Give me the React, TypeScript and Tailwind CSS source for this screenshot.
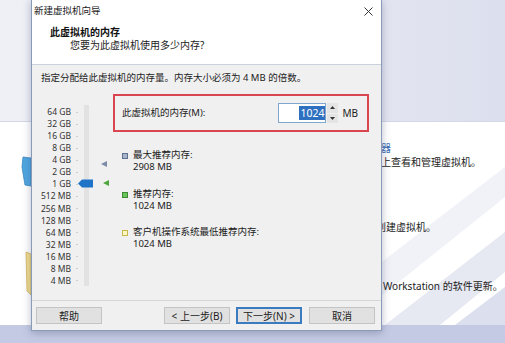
import React from 'react';

const sizes = ['64 GB', '32 GB', '16 GB', '8 GB', '4 GB', '2 GB', '1 GB', '512 MB', '256 MB', '128 MB', '64 MB', '32 MB', '16 MB', '8 MB', '4 MB'];

const font = "font-['Noto_Sans','Noto_Sans_CJK_SC',sans-serif]";

const Btn = ({ label, focused }: { label: string; focused?: boolean }) => (
  <button
    className={`h-[17px] w-[66px] text-[10px] leading-none text-[#222] bg-[#e1e1e1] ${
      focused ? 'border-2 border-[#3a7bbf]' : 'border border-[#c4c4c4]'
    }`}
  >
    {label}
  </button>
);

const Legend = ({ color, border, title, value, mt }: { color: string; border: string; title: string; value: string; mt: string }) => (
  <div className={`flex ${mt}`}>
    <div className="w-[20px] pl-[9px] pt-[4px]">
      <div className={`w-[6px] h-[6px] border ${color} ${border}`} />
    </div>
    <div className="text-[9.5px] leading-[12px] text-[#222]">
      <div>{title}</div>
      <div>{value}</div>
    </div>
  </div>
);

export default function App() {
  return (
    <div className={`relative w-[505px] h-[343px] overflow-hidden ${font}`}>
      {/* desktop app behind the dialog */}
      <div className="flex flex-col w-full h-full">
        <div className="h-[122px] bg-gradient-to-r from-[#eef0f6] via-[#e9ebf4] to-[#dcdfed] border-b border-[#d3d7e6]" />
        <div className="relative flex-1 bg-white flex">
          <svg className="absolute inset-0" width="505" height="203" viewBox="0 0 505 203">
            <polygon points="300,203 505,45 505,75 345,203" fill="#f1f2f8" />
            <polygon points="385,203 505,110 505,150 440,203" fill="#e6e8f2" />
            <polygon points="455,203 505,165 505,203" fill="#dcdfed" />
          </svg>
          <div className="relative w-[31px] h-full">
            <svg width="31" height="203" viewBox="0 0 31 203">
              <polygon points="23,35 31,36 31,64 25,63 22,45" fill="#4fa6e0" stroke="#3b86bf" strokeWidth="0.8" />
              <polygon points="26,130 31,132 31,173 27,169" fill="#f2dc8c" stroke="#cdb261" strokeWidth="0.8" />
            </svg>
          </div>
          <div className="relative ml-[350px] pt-[19px] text-[10px] leading-[14px] text-[#222] whitespace-nowrap">
            <div className="text-[#3a6db3]">器</div>
            <div>上查看和管理虚拟机。</div>
            <div className="mt-[51px] -ml-[5px]">创建虚拟机。</div>
            <div className="mt-[45px] ml-[2px]">Workstation 的软件更新。</div>
          </div>
        </div>
        <div className="h-[18px] bg-[#c4cae3]" />
      </div>

      {/* wizard dialog window */}
      <div className="absolute left-[31px] top-[-1px] w-[351px] h-[332px] flex flex-col bg-[#f0f0f0] border border-[#8a9bb8] shadow-[0_2px_8px_rgba(60,70,110,0.35)]">
        <div className="h-[22px] bg-white flex items-center justify-between pl-[2px] pr-[8px]">
          <span className="text-[9.5px] text-[#222]">新建虚拟机向导</span>
          <svg width="9" height="9" viewBox="0 0 9 9">
            <path d="M0.5 0.5 L8.5 8.5 M8.5 0.5 L0.5 8.5" stroke="#333" strokeWidth="1" />
          </svg>
        </div>
        <div className="h-[43px] bg-white border-b border-[#c9d1da] pt-[4px]">
          <div className="pl-[18px] text-[10px] leading-[13px] font-bold text-[#111]">此虚拟机的内存</div>
          <div className="pl-[38px] text-[10px] leading-[13px] text-[#222]">您要为此虚拟机使用多少内存?</div>
        </div>

        <div className="flex-1 flex flex-col">
          <div className="mt-[6px] pl-[9px] text-[9.5px] leading-[13px] text-[#222]">
            指定分配给此虚拟机的内存量。内存大小必须为 4 MB 的倍数。
          </div>
          <div className="flex flex-1">
            {/* slider */}
            <div className="w-[81px] flex">
              <div className="w-[39px] pt-[22px] text-right text-[8.5px] text-[#333]">
                {sizes.map((s) => (
                  <div key={s} className="h-[12.07px] leading-[12px] whitespace-nowrap">{s}</div>
                ))}
              </div>
              <div className="w-[12px] pt-[22px]">
                {sizes.map((s) => (
                  <div key={s} className="h-[12.07px] flex items-center pl-[5px]">
                    <div className="w-[2px] h-[1px] bg-[#cfcfcf]" />
                  </div>
                ))}
              </div>
              <div className="relative w-[30px]">
                <div className="ml-[1px] mt-[21px] w-[5px] h-[181px] bg-[#e2e2e2]" />
                <svg className="absolute left-[-5px] top-[95px]" width="16" height="9" viewBox="0 0 16 9">
                  <path d="M0 4.5 L4 0.5 L15 0.5 L15 8.5 L4 8.5 Z" fill="#1f74c8" />
                </svg>
                <svg className="absolute left-[18px] top-[77px]" width="7" height="6" viewBox="0 0 7 6">
                  <path d="M0 3 L6 0 L6 6 Z" fill="#7d8ba6" />
                </svg>
                <svg className="absolute left-[20px] top-[96px]" width="7" height="6" viewBox="0 0 7 6">
                  <path d="M0 3 L6 0 L6 6 Z" fill="#4ea63c" />
                </svg>
              </div>
            </div>

            {/* memory box and legend */}
            <div className="w-[256px]">
              <div className="mt-[10px] h-[38px] border-2 border-[#d9464f] flex items-center pl-[7px] pr-[9px]">
                <span className="text-[9.5px] text-[#222]">此虚拟机的内存(M):</span>
                <div className="ml-auto flex items-center">
                  <div className="w-[48px] h-[20px] bg-white border border-[#7ea6cf] flex items-center justify-end">
                    <span className="bg-[#2f6fc0] text-white text-[10.5px] leading-[14px] px-[1px]">1024</span>
                  </div>
                  <div className="w-[11px] h-[20px] flex flex-col gap-[1px] ml-[1px]">
                    <div className="flex-1 bg-[#e4e4e4] flex items-center justify-center">
                      <svg width="5" height="3" viewBox="0 0 5 3"><path d="M2.5 0 L5 3 L0 3 Z" fill="#333" /></svg>
                    </div>
                    <div className="flex-1 bg-[#e4e4e4] flex items-center justify-center">
                      <svg width="5" height="3" viewBox="0 0 5 3"><path d="M0 0 L5 0 L2.5 3 Z" fill="#333" /></svg>
                    </div>
                  </div>
                  <span className="ml-[4px] text-[10px] text-[#222]">MB</span>
                </div>
              </div>
              <Legend mt="mt-[17px]" color="bg-[#a8b4cc]" border="border-[#5f7090]" title="最大推荐内存:" value="2908 MB" />
              <Legend mt="mt-[15px]" color="bg-[#6cc35a]" border="border-[#3d8a30]" title="推荐内存:" value="1024 MB" />
              <Legend mt="mt-[14px]" color="bg-[#fbf6c2]" border="border-[#c8b84a]" title="客户机操作系统最低推荐内存:" value="1024 MB" />
            </div>
          </div>
        </div>

        <div className="h-[30px] border-t border-[#d6d6d6] flex items-center pl-[4px] pr-[6px]">
          <Btn label="帮助" />
          <div className="flex-1" />
          <Btn label="< 上一步(B)" />
          <div className="w-[6px]" />
          <Btn label="下一步(N) >" focused />
          <div className="w-[7px]" />
          <Btn label="取消" />
        </div>
      </div>
    </div>
  );
}
